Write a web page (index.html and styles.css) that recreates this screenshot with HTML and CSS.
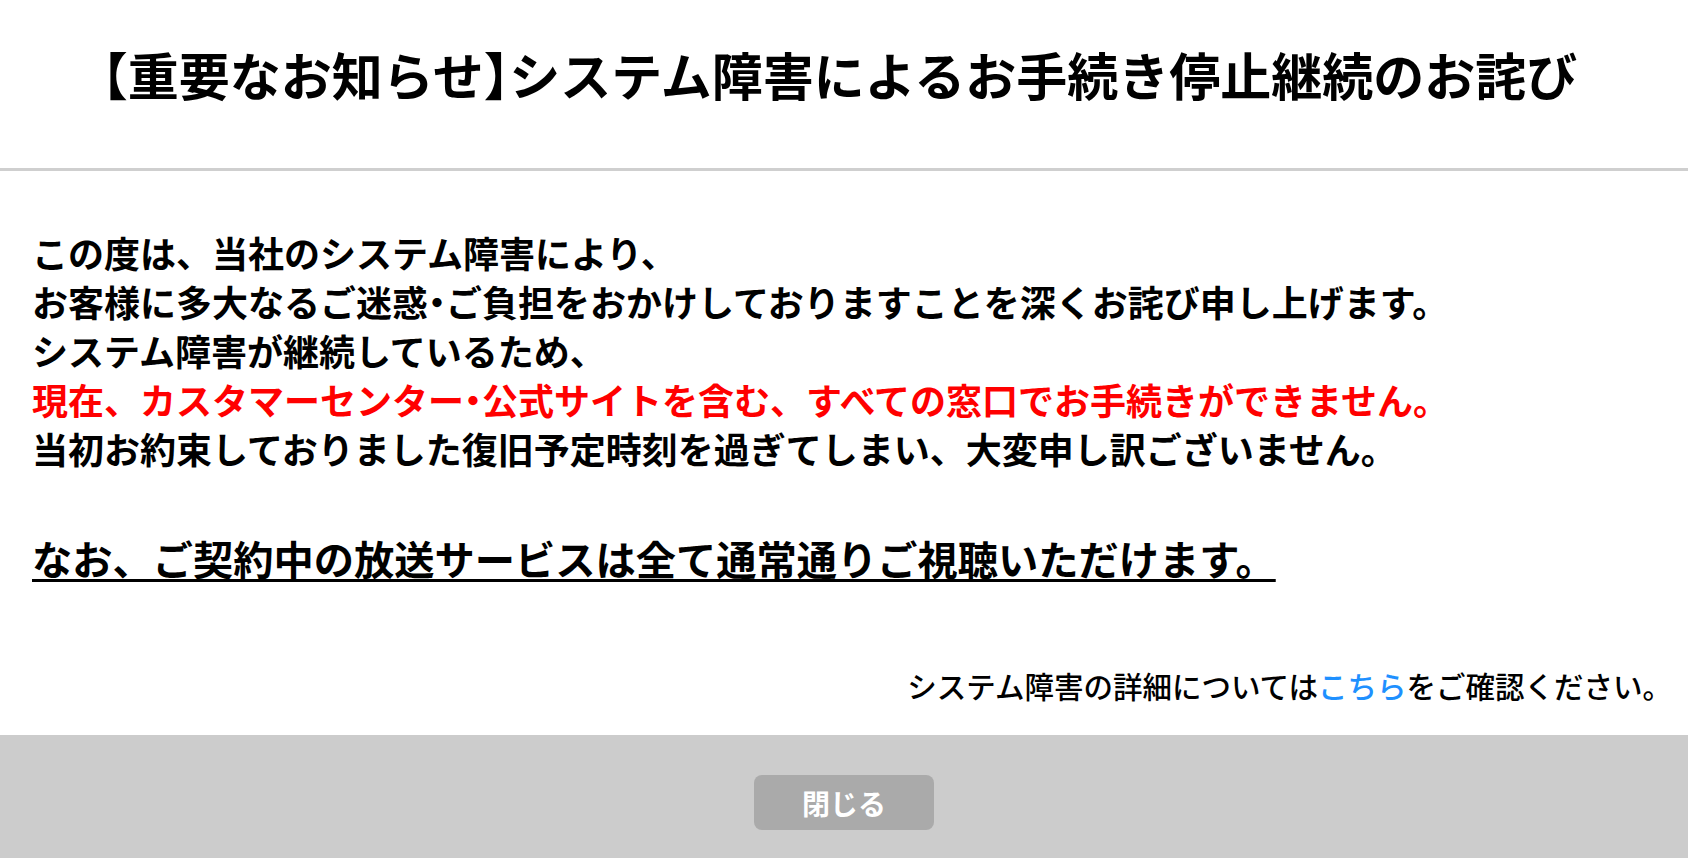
FILE: index.html
```html
<!DOCTYPE html>
<html lang="ja">
<head>
<meta charset="UTF-8">
<title>【重要なお知らせ】システム障害によるお手続き停止継続のお詫び</title>
<link rel="stylesheet" href="styles.css">
</head>
<body>
<div class="modal">
<!-- タイトル -->
<div class="modal-head">
<h1 class="modal-title">【重要なお知らせ<span class="bracket">】</span>システム障害によるお手続き停止継続のお詫び</h1>
</div>

<!-- 本文 -->
<div class="modal-body">
<p class="lead">
この度は、当社のシステム障害により、<br>
お客様に多大なるご迷惑<span class="dot">・</span>ご負担をおかけしておりますことを深くお詫び申し上げます。<br>
システム障害が継続しているため、<br>
<span class="alert">現在、カスタマーセンター<span class="dot">・</span>公式サイトを含む、すべての窓口でお手続きができません。</span><br>
当初お約束しておりました復旧予定時刻を過ぎてしまい、大変申し訳ございません。
</p>
<p class="notice">なお、ご契約中の放送サービスは全て通常通りご視聴いただけます。</p>
<p class="detail">システム障害の詳細については<a href="#" class="link">こちら</a>をご確認ください。</p>
</div>

<!-- フッター -->
<div class="modal-foot">
<button class="btn-close" type="button">閉じる</button>
</div>
</div>
</body>
</html>
```

FILE: styles.css
```css
body { margin:0; background:#fff; color:#000; font-family:"Noto Sans CJK JP", "Noto Sans", sans-serif; }
.modal { min-height:100vh; display:flex; flex-direction:column; }
.modal-head { padding:45px 34px 64px 0; border-bottom:3px solid #cfcfcf; text-align:center; }
.modal-title { margin:0; font-size:51px; line-height:59px; font-weight:bold; }
.bracket, .dot { font-feature-settings:"halt"; }
.modal-body { padding:57px 16px 30px 32px; }
.lead { margin:0; font-size:36px; line-height:49px; font-weight:bold; }
.alert { color:#ff0000; }
.notice { margin:57px 0 0; font-size:40.25px; line-height:56px; font-weight:bold; text-decoration:underline; text-decoration-thickness:3px; text-underline-offset:4px; }
.detail { margin:79px 0 0; text-align:right; font-size:29.5px; line-height:40px; font-weight:500; }
.link { color:#1e90ff; text-decoration:none; }
.modal-foot { flex:1; background:#cccccc; padding:40px 0 26px; text-align:center; }
.btn-close { width:180px; height:55px; border:none; border-radius:8px; background:#aaaaaa; color:#fff; font-family:inherit; font-size:28px; font-weight:bold; cursor:pointer; }
```
